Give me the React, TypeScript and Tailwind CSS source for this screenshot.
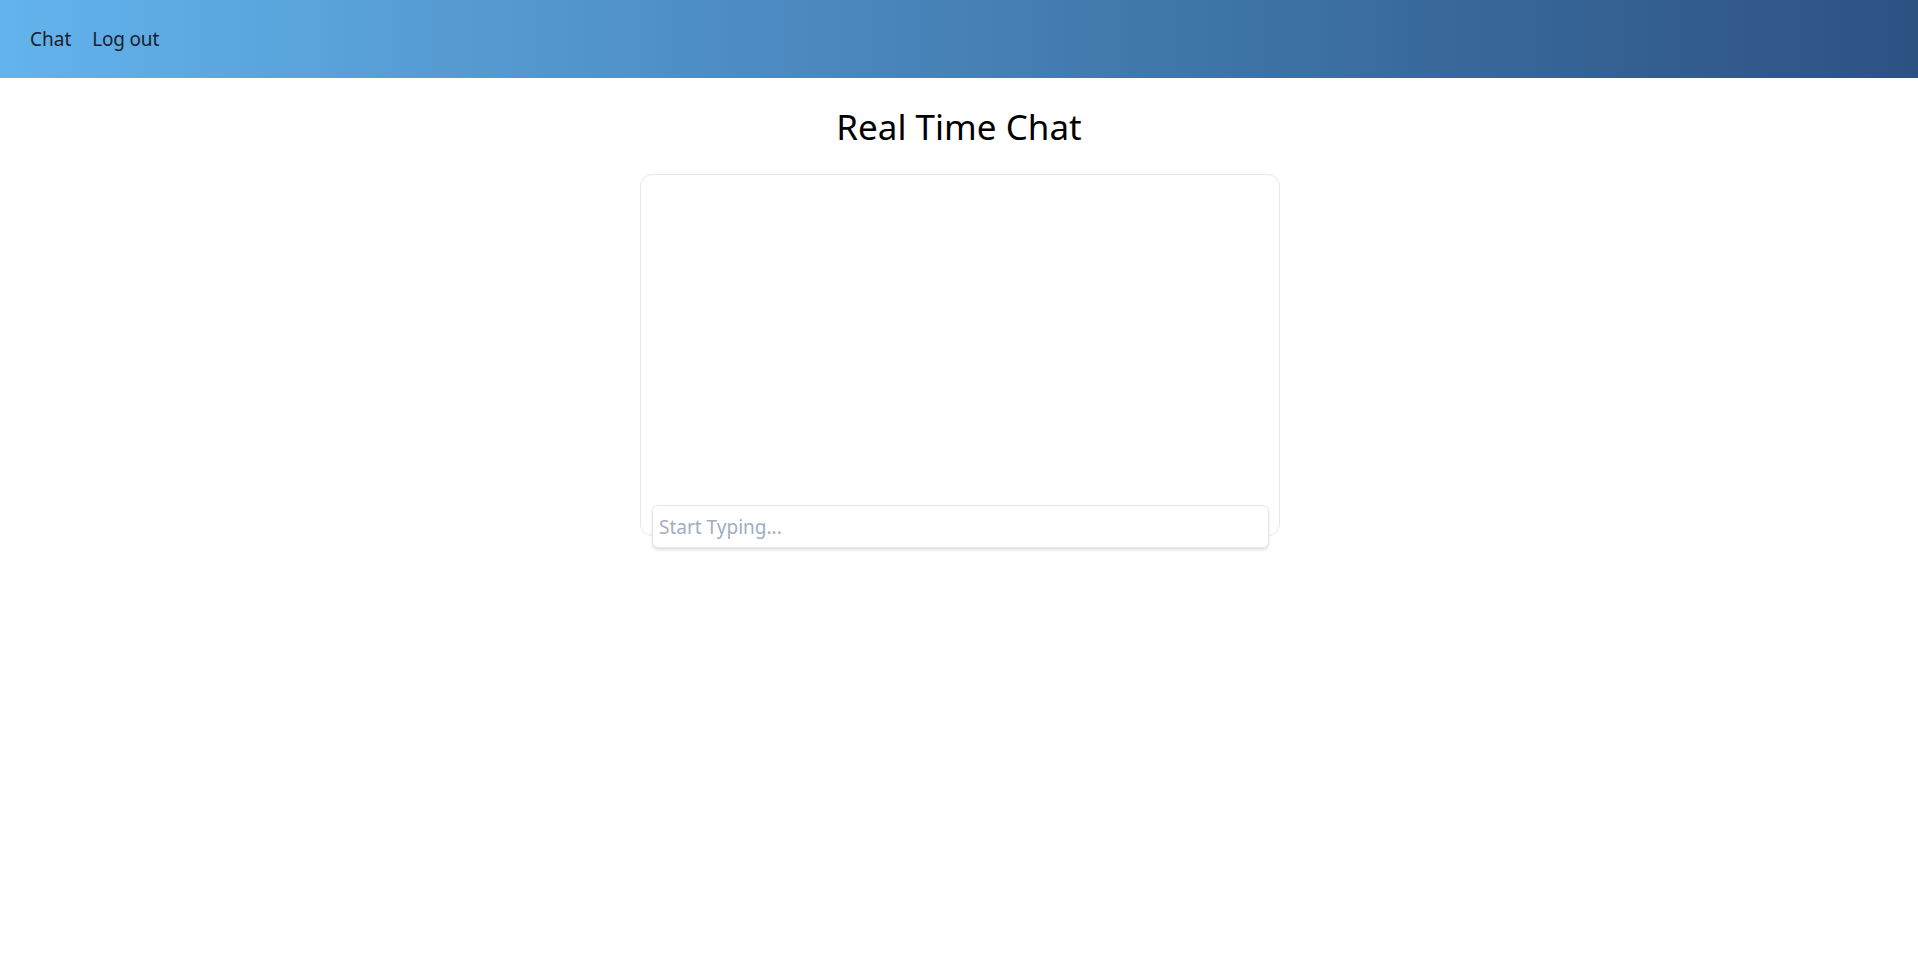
export default function App() {
  return (
    <div className="min-h-screen bg-white font-['Noto_Sans',sans-serif] text-[#1a202c]">
      {/* Top bar */}
      <nav className="h-[78px] flex items-center gap-[21px] px-[30px] bg-gradient-to-r from-[#63b3ed] to-[#2c5282]">
        <a href="#" className="text-[19px] leading-none">Chat</a>
        <a href="#" className="text-[19px] leading-none tracking-[-0.2px]">Log out</a>
      </nav>

      <main className="flex flex-col items-center">
        <h1 className="mt-[25px] text-[35px] leading-[48px] text-black">Real Time Chat</h1>

        {/* Chat box */}
        <div className="mt-[23px] ml-[2px] w-[640px] h-[362px] flex flex-col pl-[11px] pr-[10px] border border-[#e4e7eb] rounded-xl">
          <div className="h-[330px] shrink-0"></div>
          <input
            type="text"
            placeholder="Start Typing..."
            className="shrink-0 h-[43px] w-full px-[6px] text-[19px] bg-white border border-[#e2e8f0] rounded-md shadow-[0_2px_3px_rgba(0,0,0,0.12)] outline-none placeholder:text-[#a0aec0]"
          />
        </div>
      </main>
    </div>
  );
}
